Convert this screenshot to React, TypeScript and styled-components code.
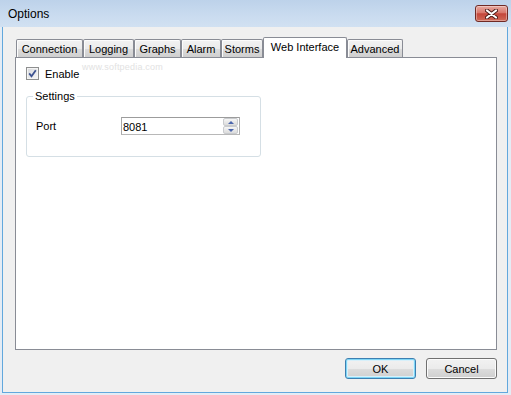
import styled, { createGlobalStyle } from 'styled-components'

const GlobalStyle = createGlobalStyle`
	html, body {
		margin: 0;
		padding: 0;
	}
	body {
		font-family: "Liberation Sans", Arial, sans-serif;
		font-size: 11px;
		color: #000;
		background: #fff;
	}
`

const Window = styled.div`
	position: relative;
	width: 511px;
	height: 395px;
	display: flex;
	flex-direction: column;
	background: #e4ecf5;
	overflow: hidden;
`
const TitleBar = styled.div`
	flex: none;
	height: 27px;
	display: flex;
	align-items: flex-start;
	justify-content: space-between;
	background: linear-gradient(#bdd2ea, #c9dbef 55%, #d1e1f2);
`
const Title = styled.span`
	font-size: 12px;
	line-height: 14px;
	margin: 7px 0 0 8px;
	color: #000;
`
const CloseButton = styled.div`
	width: 33px;
	height: 17px;
	margin: 5px 3px 0 0;
	box-sizing: border-box;
	border: 1px solid #702a25;
	border-radius: 3px;
	background: linear-gradient(#e7aaa1, #d9786c 45%, #c4463a 52%, #cf6a58);
	box-shadow: inset 0 0 0 1px rgba(255, 255, 255, 0.35);
	display: flex;
	align-items: center;
	justify-content: center;
`
const Frame = styled.div`
	flex: 1;
	margin: 0 3px 2px 2px;
	border: 1px solid #62a8dd;
	border-top: none;
	background: #f0f0f0;
	padding: 10px 10px 13px 12px;
	display: flex;
	flex-direction: column;
`
const TabStrip = styled.div`
	height: 20px;
	display: flex;
	align-items: flex-end;
	padding-left: 1px;
`
const Tab = styled.div<{ $w: number; $active?: boolean }>`
	position: relative;
	z-index: ${(p) => (p.$active ? 2 : 1)};
	width: ${(p) => p.$w}px;
	height: ${(p) => (p.$active ? 21 : 18)}px;
	margin-bottom: ${(p) => (p.$active ? -1 : 0)}px;
	box-sizing: border-box;
	border: 1px solid #898c95;
	border-bottom: none;
	border-radius: 2px 2px 0 0;
	background: ${(p) =>
		p.$active ? '#fff' : 'linear-gradient(#f2f2f2, #ebebeb 50%, #dddddd 50%, #cfcfcf)'};
	box-shadow: ${(p) => (p.$active ? 'none' : 'inset 1px 1px 0 #fcfcfc')};
	display: flex;
	align-items: center;
	justify-content: center;
	padding: ${(p) => (p.$active ? '0 0 3px' : '1px 0 0')};
	white-space: nowrap;
	font-size: 11px;
`
const Panel = styled.div`
	flex: 1;
	border: 1px solid #898c95;
	background: #fff;
	padding: 9px 10px;
	display: flex;
	flex-direction: column;
	align-items: flex-start;
`
const CheckRow = styled.label`
	display: flex;
	align-items: center;
	gap: 6px;
	height: 13px;
`
const CheckBox = styled.span`
	width: 13px;
	height: 13px;
	box-sizing: border-box;
	border: 1px solid #8e8f8f;
	background: linear-gradient(135deg, #d6d8db, #f7f7f7);
	box-shadow: inset 0 0 0 1px #f4f4f4;
	display: flex;
	align-items: center;
	justify-content: center;
`
const GroupBox = styled.fieldset`
	width: 235px;
	box-sizing: border-box;
	margin: 10px 0 0;
	padding: 14px 9px 21px;
	border: 1px solid #d5dfe5;
	border-radius: 3px;
	min-inline-size: 0;
`
const Legend = styled.legend`
	padding: 0 2px;
	margin-left: -3px;
	line-height: 13px;
	font-size: 11px;
`
const FieldRow = styled.div`
	display: flex;
	align-items: center;
`
const FieldLabel = styled.span`
	width: 85px;
`
const SpinBox = styled.div`
	width: 119px;
	height: 18px;
	box-sizing: border-box;
	border: 1px solid #a9a9a9;
	border-color: #9c9c9c #b0b0b0 #b8b8b8 #a9a9a9;
	background: #fff;
	display: flex;
	align-items: center;
	padding: 0 1px 0 1px;
`
const SpinValue = styled.span`
	flex: 1;
	font-size: 11px;
	padding-top: 1px;
`
const SpinButtons = styled.div`
	display: flex;
	flex-direction: column;
	width: 15px;
	height: 16px;
`
const SpinButton = styled.div<{ $down?: boolean }>`
	flex: 1;
	box-sizing: border-box;
	border: 1px solid #c9cbce;
	border-radius: 2px;
	background: linear-gradient(#f6f6f6, #e8e8e8 50%, #dcdcdc);
	display: flex;
	align-items: center;
	justify-content: center;
	&::after {
		content: '';
		border-left: 3px solid transparent;
		border-right: 3px solid transparent;
		${(p) => (p.$down ? 'border-top: 3px solid #4b66ad;' : 'border-bottom: 3px solid #4b66ad;')}
	}
`
const Footer = styled.div`
	margin-top: 8px;
	display: flex;
	justify-content: flex-end;
	gap: 10px;
`
const Button = styled.button<{ $default?: boolean }>`
	width: 71px;
	height: 21px;
	box-sizing: border-box;
	font-family: "Liberation Sans", Arial, sans-serif;
	font-size: 11px;
	color: #000;
	border: 1px solid ${(p) => (p.$default ? '#3c7fb1' : '#707070')};
	border-radius: 3px;
	background: linear-gradient(#f2f2f2, #ebebeb 50%, #dddddd 50%, #cfcfcf);
	box-shadow: ${(p) =>
		p.$default ? 'inset 0 0 0 1px #7fd6f6, inset 0 0 0 2px #d8f0fa' : 'inset 0 0 0 1px #fbfbfb'};
	padding: 0;
	padding-top: 1px;
`
const WatermarkUrl = styled.div`
	position: absolute;
	left: 82px;
	top: 62px;
	pointer-events: none;
	z-index: 5;
	font-size: 9px;
	letter-spacing: 0.2px;
	color: #e2e2e2;
`

const tabs = [
	{ label: 'Connection', w: 67 },
	{ label: 'Logging', w: 51 },
	{ label: 'Graphs', w: 47 },
	{ label: 'Alarm', w: 40 },
	{ label: 'Storms', w: 42 },
	{ label: 'Web Interface', w: 84, active: true },
	{ label: 'Advanced', w: 56 },
]

function CloseIcon() {
	return (
		<svg width="13" height="10" viewBox="0 0 13 10">
			<path d="M2 1.5 L11 8.5 M11 1.5 L2 8.5" stroke="#4a1a16" strokeWidth="4" strokeLinecap="round" />
			<path d="M2 1.5 L11 8.5 M11 1.5 L2 8.5" stroke="#fff" strokeWidth="2.2" strokeLinecap="round" />
		</svg>
	)
}

function CheckIcon() {
	return (
		<svg width="9" height="9" viewBox="0 0 9 9">
			<path d="M1.2 4.4 L3.5 7.2 L7.8 1.2" fill="none" stroke="#3d5290" strokeWidth="1.8" />
		</svg>
	)
}

function App() {
	return (
		<Window>
			<GlobalStyle />
			<TitleBar>
				<Title>Options</Title>
				<CloseButton>
					<CloseIcon />
				</CloseButton>
			</TitleBar>
			<Frame>
				<TabStrip>
					{tabs.map((t) => (
						<Tab key={t.label} $w={t.w} $active={t.active}>
							{t.label}
						</Tab>
					))}
				</TabStrip>
				<Panel>
					<CheckRow>
						<CheckBox>
							<CheckIcon />
						</CheckBox>
						Enable
					</CheckRow>
					<GroupBox>
						<Legend>Settings</Legend>
						<FieldRow>
							<FieldLabel>Port</FieldLabel>
							<SpinBox>
								<SpinValue>8081</SpinValue>
								<SpinButtons>
									<SpinButton />
									<SpinButton $down />
								</SpinButtons>
							</SpinBox>
						</FieldRow>
					</GroupBox>
				</Panel>
				<Footer>
					<Button $default>OK</Button>
					<Button>Cancel</Button>
				</Footer>
			</Frame>
			<WatermarkUrl>www.softpedia.com</WatermarkUrl>
		</Window>
	)
}

export default App
